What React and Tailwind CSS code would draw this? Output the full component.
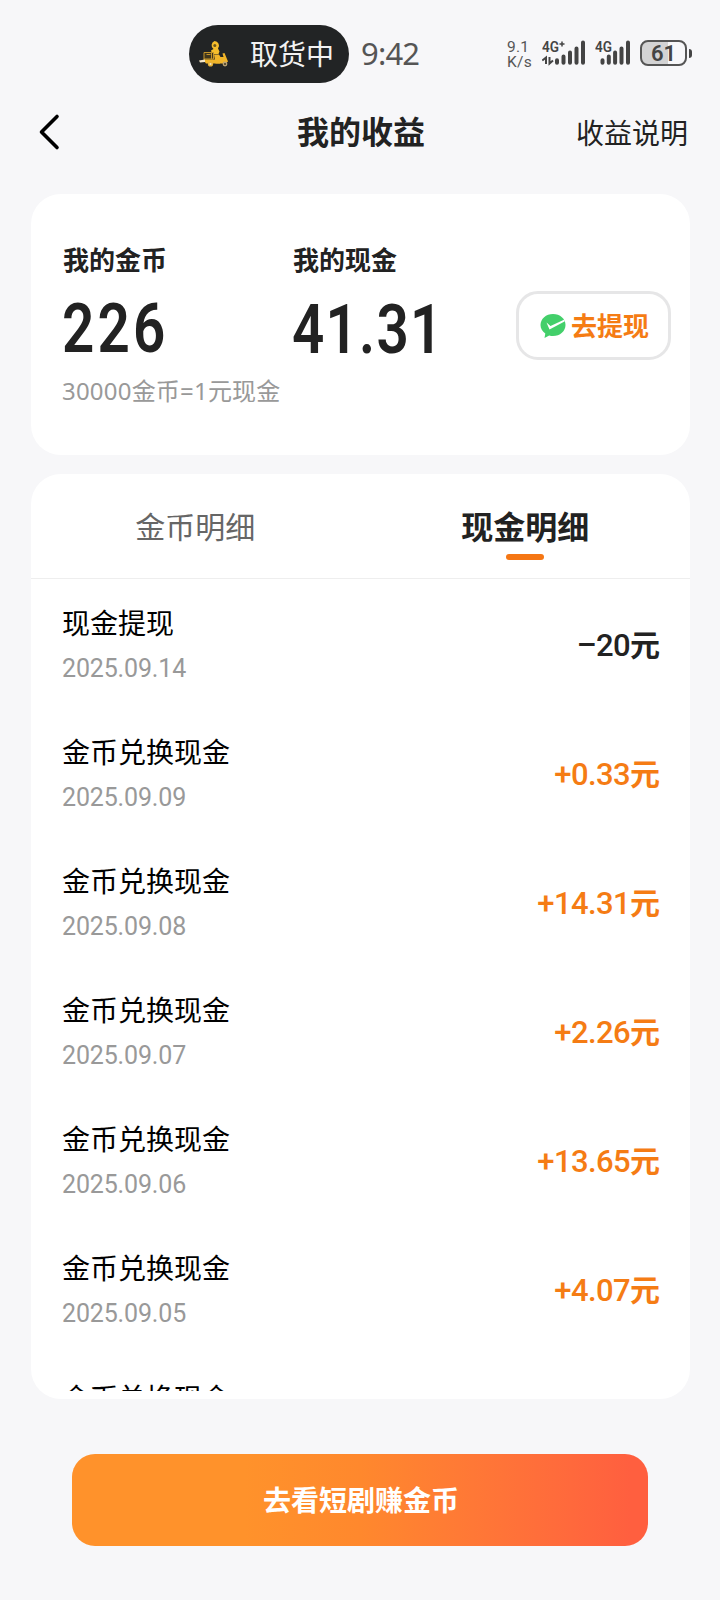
const records = [
  { title: '现金提现', date: '2025.09.14', amount: '–20', out: true },
  { title: '金币兑换现金', date: '2025.09.09', amount: '+0.33' },
  { title: '金币兑换现金', date: '2025.09.08', amount: '+14.31' },
  { title: '金币兑换现金', date: '2025.09.07', amount: '+2.26' },
  { title: '金币兑换现金', date: '2025.09.06', amount: '+13.65' },
  { title: '金币兑换现金', date: '2025.09.05', amount: '+4.07' },
];

function Courier() {
  return (
    <svg width="30" height="28" viewBox="0 0 30 28" className="shrink-0">
      <path d="M15.500 1a4.600 4.600 0 0 1 3.500 7.500l1.500 3-1 2.500h-6.500l-1-3.500 2.500-1.500A4.600 4.600 0 0 1 15.500 1z" fill="#f5bd2c" />
      <circle cx="15.800" cy="5.500" r="1.500" fill="#6b541c" />
      <path d="M15 14.500h5l1.500 2.500h3l-1-3.500 2-.5 3.500 8.500-2.500 2h-10z" fill="#f0b429" />
      <path d="M5 12.500h9.500v6.500H5z" fill="#40361c" stroke="#c4942a" strokeWidth="1" />
      <path d="M7.500 14.500h4M12.500 13v6" stroke="#c4942a" strokeWidth="1" />
      <path d="M4 19.500h17v4H7z" fill="#f0b429" />
      <path d="M0 20.500l6-1v2.500l-5 .5z" fill="#f5e6c8" />
      <circle cx="11.500" cy="24" r="2.600" fill="#e6b23a" />
      <circle cx="26" cy="24" r="2.400" fill="#b9a173" />
      <circle cx="11.500" cy="24" r="1" fill="#f5e6c8" />
      <circle cx="26" cy="24" r="1" fill="#42391f" />
    </svg>
  );
}

function StatusBar() {
  return (
    <div className="flex h-[83px] items-end pl-[189px]">
      <div className="flex h-[58px] w-[160px] items-center rounded-full bg-[#222425] pl-[10px]">
        <Courier />
        <span className="ml-[21px] whitespace-nowrap text-[28px] leading-[58px] text-[#f2f2f2]">取货中</span>
      </div>
      <span className="ml-[12px] w-[146px] text-[31px] leading-[60px] tracking-[-0.8px] text-[#555]">9:42</span>
      <div className="flex h-[58px] w-[27px] flex-col justify-center font-['Roboto',sans-serif] text-[15.500px] leading-[16px] text-[#555]">
        <span className="tracking-[0.2px]">9.1</span>
        <span className="-mt-px tracking-[0.3px]">K/s</span>
      </div>
      <svg width="45" height="36" viewBox="0 -6 45 36" className="mb-[13px] ml-[8px] shrink-0 font-['Roboto',sans-serif]">
        <text x="0" y="12" fontSize="15" fontWeight="600" fill="#444" textLength="17" lengthAdjust="spacingAndGlyphs">4G</text>
        <path d="M17.500 4h5M20 1.500v5" stroke="#444" strokeWidth="1.500" />
        <path d="M.3 20.500L4 17.500v6.500M7.500 17v6.500l3.500-3" fill="none" stroke="#444" strokeWidth="2" />
        <path d="M15 20.300v2.500M21.500 16.500v6.300M28 12.500v10.300M34.500 8.500v14.300M41 2.500v20.300" stroke="#444" strokeWidth="4" strokeLinecap="round" />
      </svg>
      <svg width="38" height="36" viewBox="0 -6 38 36" className="mb-[13px] ml-[8px] shrink-0 font-['Roboto',sans-serif]">
        <text x="0" y="12" fontSize="15" fontWeight="600" fill="#444" textLength="17" lengthAdjust="spacingAndGlyphs">4G</text>
        <path d="M7.500 20.300v2.500M13.800 16.500v6.300M20.100 12.500v10.300M26.500 8.500v14.300M33 2.500v20.300" stroke="#444" strokeWidth="4" strokeLinecap="round" />
      </svg>
      <div className="mb-[17px] ml-[7px] flex items-center">
        <div className="flex h-[26px] w-[47px] items-center justify-center rounded-[8px] border-2 border-[#555] bg-linear-to-r from-[#d3d3d4] from-60% to-[#f7f7f9] to-60% pt-px font-['Roboto',sans-serif] text-[22px] font-semibold leading-none text-[#444]">61</div>
        <div className="ml-[2px] h-[9px] w-[3px] rounded-r bg-[#444]" />
      </div>
    </div>
  );
}

export default function App() {
  return (
    <div className="flex h-[1600px] w-[720px] flex-col overflow-hidden bg-[#f7f7f9] font-['Noto_Sans','Noto_Sans_CJK_SC',sans-serif] text-[#222]">
      <StatusBar />
      <header className="grid h-[111px] grid-cols-[1fr_auto_1fr] items-center pb-[14px] pl-[35px] pr-[32px]">
        <svg width="26" height="38" viewBox="0 0 26 38" fill="none" stroke="#000" strokeWidth="3.600" strokeLinecap="round" strokeLinejoin="round">
          <path d="M22 3.500L6.500 19l15.500 15.500" />
        </svg>
        <h1 className="pr-px text-[32px] font-bold leading-[40px]">我的收益</h1>
        <span className="pt-[2px] text-right text-[28px] leading-[40px]">收益说明</span>
      </header>

      <section className="ml-[31px] flex h-[261px] w-[659px] shrink-0 rounded-[30px] bg-white pl-[32px] pt-[48px]">
        <div className="w-[230px] whitespace-nowrap">
          <div className="text-[26px] font-semibold leading-[36px]">我的金币</div>
          <div className="mt-[15px] h-[72px] origin-left -translate-x-px scale-x-[0.82] font-['Roboto',sans-serif] text-[69px] font-semibold leading-[72px] tracking-[3.800px]">226</div>
          <div className="mt-[8px] -translate-x-px text-[24px] leading-[36px] tracking-[0.2px] text-[#999]">30000金币=1元现金</div>
        </div>
        <div className="w-[223px] whitespace-nowrap">
          <div className="text-[26px] font-semibold leading-[36px]">我的现金</div>
          <div className="mt-[16px] h-[72px] origin-left -translate-x-px scale-x-[0.82] font-['Roboto',sans-serif] text-[69px] font-semibold leading-[72px] tracking-[1.500px]">41.31</div>
        </div>
        <button className="mt-[49px] flex h-[69px] w-[155px] items-center rounded-[22px] border-[3px] border-[#e6e6e7] pl-[21px]">
          <svg width="26" height="26" viewBox="0 0 26 26" className="shrink-0">
            <path d="M13 1C6 1 .5 5.800.5 12c0 3.600 1.900 6.500 4.800 8.500L4.500 25l4.700-2.600c1.200.4 2.500.6 3.800.6 7 0 12.500-4.800 12.500-11S20 1 13 1z" fill="#43cf6a" />
            <path d="M6.500 9.500l4 3.500L24.500 6.500v2L9.500 16.500z" fill="#fff" />
          </svg>
          <span className="ml-[5px] whitespace-nowrap text-[26px] font-semibold leading-[36px] text-[#f57c14]">去提现</span>
        </button>
      </section>

      <section className="ml-[31px] mt-[19px] flex h-[925px] w-[659px] shrink-0 flex-col rounded-[30px] bg-white pb-[8px]">
        <nav className="grid h-[105px] shrink-0 grid-cols-2 border-b border-[#eee] text-center">
          <div className="pr-px pt-[31px] text-[30px] leading-[44px] text-[#666]">金币明细</div>
          <div className="flex flex-col items-center pt-[31px] text-[32px] font-semibold leading-[44px]">
            现金明细
            <span className="mt-[5px] h-[6px] w-[38px] rounded-full bg-[#f57614]" />
          </div>
        </nav>
        <ul className="min-h-0 flex-1 overflow-hidden pl-[31px] pr-[30px] pt-[2px]">
          {records.map((r) => (
            <li key={r.date} className="flex h-[129px] items-center justify-between">
              <div className="pt-[2px]">
                <div className="text-[28px] leading-[44px] text-black">{r.title}</div>
                <div className="pt-px font-['Roboto',sans-serif] text-[25px] leading-[46px] tracking-[-0.15px] text-[#999]">{r.date}</div>
              </div>
              <div className={r.out ? 'text-[30px] font-semibold' : 'text-[30px] font-semibold text-[#f57c14]'}>
                <span className="font-['Roboto',sans-serif] text-[31px] font-medium tracking-[-0.6px]">{r.amount}</span>元
              </div>
            </li>
          ))}
          <li className="h-[129px] pt-[21px] text-[28px] leading-[44px] text-black">金币兑换现金</li>
        </ul>
      </section>

      <button className="ml-[72px] mt-[55px] h-[92px] w-[576px] shrink-0 rounded-[23px] bg-linear-to-r from-[#ff922b] from-30% via-[#ff882d] via-50% to-[#ff5f3f] to-97% pl-[2px] text-[28px] font-bold text-white">
        去看短剧赚金币
      </button>
    </div>
  );
}
